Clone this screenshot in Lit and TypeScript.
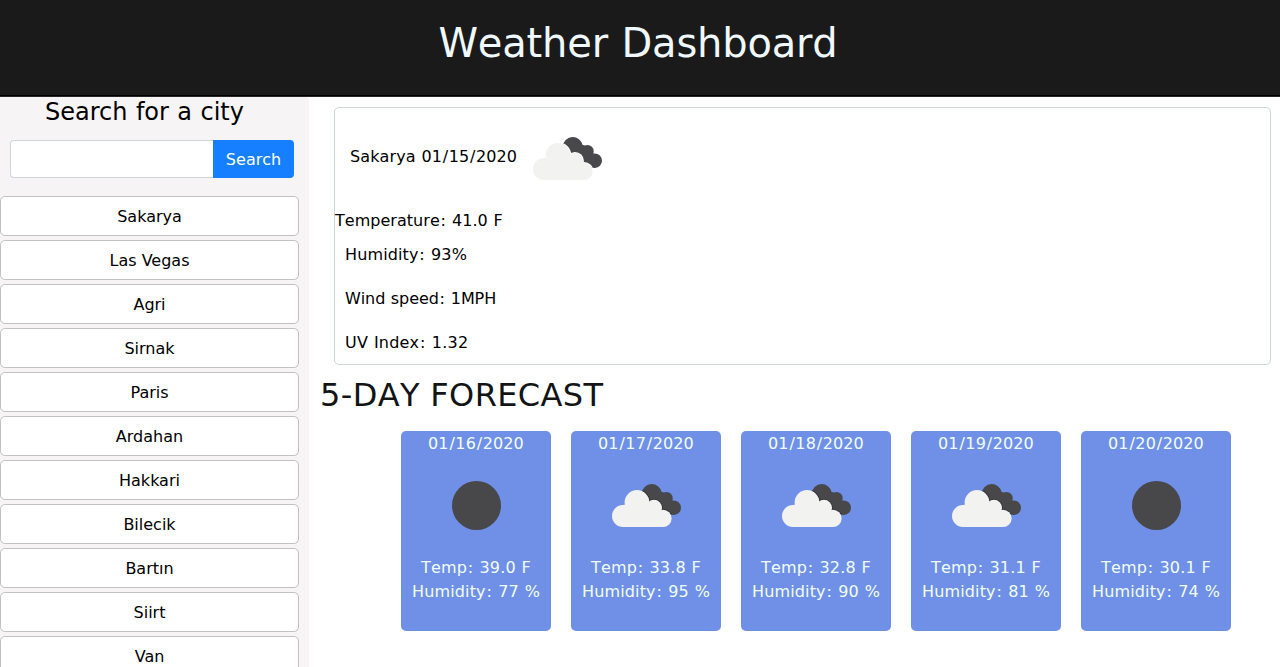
import { LitElement, html, css, svg } from "lit";
import { customElement, property, state } from "lit/decorators.js";

type Sky = "clouds" | "clear";

interface Day {
  date: string;
  sky: Sky;
  temp: string;
  humidity: number;
}

const CITIES = ["Sakarya", "Las Vegas", "Agri", "Sirnak", "Paris", "Ardahan", "Hakkari", "Bilecik", "Bartın", "Siirt", "Van"];

const DAYS: Day[] = [
  { date: "01/16/2020", sky: "clear", temp: "39.0", humidity: 77 },
  { date: "01/17/2020", sky: "clouds", temp: "33.8", humidity: 95 },
  { date: "01/18/2020", sky: "clouds", temp: "32.8", humidity: 90 },
  { date: "01/19/2020", sky: "clouds", temp: "31.1", humidity: 81 },
  { date: "01/20/2020", sky: "clear", temp: "30.1", humidity: 74 },
];

/* Gives colons and slashes a little more room inside a reading. */
const airy = (text: string) =>
  text.split(/([:/])/).map((part) => (part === ":" || part === "/" ? html`<span class="wide">${part}</span>` : part));

@customElement("weather-icon")
class WeatherIcon extends LitElement {
  static styles = css`
    :host { display: block; width: 100px; height: 100px; flex: none; }
    .icon { display: block; width: 100px; height: 100px; }
    .dark { fill: #48484a; }
    .light { fill: #f2f2f1; }
    .edge { fill: #303137; }
    .halo { fill: #ffffff; }
  `;
  @property() sky: Sky = "clouds";
  @property({ type: Boolean }) halo = false;

  private front(grow: number) {
    return svg`
      <circle cx="27" cy="60" r=${11 + grow}></circle>
      <circle cx="41" cy="46.4" r=${12.4 + grow}></circle>
      <circle cx="58" cy="51.8" r=${8 + grow}></circle>
      <circle cx="67" cy="62.4" r=${8.6 + grow}></circle>`;
  }

  render() {
    if (this.sky === "clear") {
      return html`<svg class="icon" viewBox="0 0 100 100"><circle class="dark" cx="50.5" cy="49.5" r="24.5"></circle></svg>`;
    }
    return html`<svg class="icon" viewBox="0 0 100 100">
      <defs><clipPath id="back">
        <circle cx="55.7" cy="38" r="10"></circle>
        <circle cx="70.5" cy="42.2" r="6.2"></circle>
        <circle cx="77.7" cy="51.7" r="7.3"></circle>
        <path d="M50 44L60 34L69 37L76 45L78 59L69 57L58 49Z"></path>
      </clipPath></defs>
      <g clip-path="url(#back)">
        <rect class="dark" x="40" y="25" width="50" height="40"></rect>
        <g class=${this.halo ? "halo" : "edge"}>${this.front(0.9)}</g>
      </g>
      <g class="light">${this.front(0)}<path d="M27 71V49L41 46L58 50L67 60V71Z"></path></g>
    </svg>`;
  }
}

@customElement("app-root")
class AppRoot extends LitElement {
  static styles = css`
    :host {
      display: flex; flex-direction: column; height: 667px; overflow: hidden;
      background: #fff; color: #121416;
      font: 16px/24px Verdana, "DejaVu Sans", sans-serif;
    }
    * { box-sizing: border-box; }
    h1, h2, h3, p { margin: 0; font-weight: 400; }
    .wide { padding: 0 0.4px 0 0.7px; }
    .top {
      flex: none; height: 97px; padding: 19px 4px 0 0; text-align: center;
      background: #1a1a1a; border-bottom: 1px solid #262626; box-shadow: inset 0 -1px #000;
    }
    .title { font-size: 40px; line-height: 48px; color: #f0f8ff; font-kerning: none; letter-spacing: -0.18px; word-spacing: 1px; }
    .body { flex: 1; min-height: 0; display: flex; }
    .side { flex: none; width: 309px; background: #f6f4f5; border-top-right-radius: 4px; }
    .label { padding: 1px 20px 0 0; font-size: 24px; line-height: 29px; text-align: center; color: #000; word-spacing: 0.8px; }
    .form { display: flex; margin: 13px 15px 18px 10px; height: 38px; }
    .field {
      flex: 1; min-width: 0; border: 1px solid #ced4da; border-right: 0;
      border-radius: 4px 0 0 4px; background: #fff; font: inherit; padding: 6px 12px;
    }
    .go {
      flex: none; width: 81px; border: 0; padding: 2px 0 0; border-radius: 0 4px 4px 0;
      background: #167fff; color: #fff; font: inherit; letter-spacing: 0.1px;
    }
    .cities { display: flex; flex-direction: column; gap: 4px; width: 299px; }
    .city {
      height: 40px; flex: none; border: 1px solid #c2c1c2; border-radius: 5px;
      background: #fff; font: inherit; color: #000; padding: 2px 0 0;
    }
    .main { flex: 1; min-width: 0; padding: 10px 9px 0 11px; }
    .now {
      margin-left: 14px; height: 258px; border: 1px solid #ced4da; border-radius: 5px;
      color: #000; word-spacing: 0.6px; font-kerning: none;
    }
    .place { display: flex; align-items: center; height: 101px; padding-left: 15px; }
    .name { padding-bottom: 3px; letter-spacing: 0.12px; }
    .line { height: 44px; padding: 10px; letter-spacing: 0.13px; }
    .wind { letter-spacing: -0.08px; }
    .uv { letter-spacing: 0.2px; }
    .temp { height: 24px; letter-spacing: 0.03px; }
    .heading { font-size: 32px; line-height: 38px; margin: 11px 0 17px; font-kerning: none; letter-spacing: 0.36px; }
    .days { display: flex; gap: 20px; margin-left: 81px; }
    .day {
      width: 150px; height: 200px; border-radius: 5px; background: #7090e8; color: #f0fff6;
      display: flex; flex-direction: column; align-items: center; white-space: nowrap;
      padding-top: 1px; word-spacing: 0.6px; letter-spacing: 0.15px; font-kerning: none;
    }
  `;

  @state() private cities = CITIES;

  render() {
    return html`
      <header class="top"><h1 class="title">Weather Dashboard</h1></header>
      <div class="body">
        <aside class="side">
          <h3 class="label">Search for a city</h3>
          <div class="form"><input class="field" aria-label="City" /><button class="go">Search</button></div>
          <div class="cities">${this.cities.map((c) => html`<button class="city">${c}</button>`)}</div>
        </aside>
        <main class="main">
          <section class="now">
            <div class="place"><span class="name">${airy("Sakarya 01/15/2020")}</span><weather-icon sky="clouds" halo></weather-icon></div>
            <p class="temp">${airy("Temperature: 41.0 F")}</p>
            <p class="line">${airy("Humidity: 93%")}</p>
            <p class="line wind">${airy("Wind speed: 1MPH")}</p>
            <p class="line uv">${airy("UV Index: 1.32")}</p>
          </section>
          <h2 class="heading">5-DAY FORECAST</h2>
          <section class="days">
            ${DAYS.map((d) => html`<article class="day">
              <span>${airy(d.date)}</span>
              <weather-icon .sky=${d.sky}></weather-icon>
              <span>${airy(`Temp: ${d.temp} F`)}</span>
              <span>${airy(`Humidity: ${d.humidity} %`)}</span>
            </article>`)}
          </section>
        </main>
      </div>`;
  }
}
